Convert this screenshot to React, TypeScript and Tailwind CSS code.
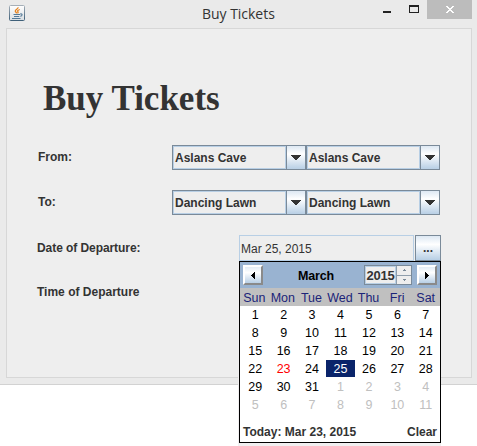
import React from "react";

const DAYS = ["Sun", "Mon", "Tue", "Wed", "Thu", "Fri", "Sat"];
const CELLS = Array.from({ length: 42 }, (_, i) => ({
  day: i < 31 ? i + 1 : i - 30,
  outside: i >= 31,
}));

function JavaIcon() {
  return (
    <svg width="16" height="16" viewBox="0 0 16 16" fill="none">
      <defs>
        <linearGradient id="tile" x1="0" y1="0" x2="0" y2="1">
          <stop offset="0" stopColor="#fff" />
          <stop offset="1" stopColor="#d9dee2" />
        </linearGradient>
        <linearGradient id="edge" x1="0" y1="0" x2="0" y2="1">
          <stop offset="0" stopColor="#a5afb8" />
          <stop offset="1" stopColor="#3f6079" />
        </linearGradient>
      </defs>
      <rect x=".5" y=".5" width="15" height="15" rx="1" fill="url(#tile)" stroke="url(#edge)" />
      <path d="M9 2.300C9.600 4 6 4.500 6.300 6.200C6.400 7 7.500 7.500 7.700 8.300M10.800 4.500C8.500 5.200 8.200 6 9 6.800C9.300 7.300 9 7.900 8.500 8.300" stroke="#e8841f" strokeWidth="1.300" />
      <path d="M4.500 9.500H11M5 11.500H10.300M3 13.500H11.500M11.200 9C13.800 8.300 13.600 11 11.200 11.300" stroke="#557a98" strokeWidth="1.100" />
    </svg>
  );
}

function Combo({ value }: { value: string }) {
  return (
    <div className="flex h-[25px] w-[134px] border border-[#7a8a99]">
      <div className="flex-1 border border-[#b8cfe5] pl-px leading-[22px] whitespace-nowrap">{value}</div>
      <div className="flex w-[19px] items-center justify-center border-l border-[#7a8a99] bg-linear-to-b from-[#dde8f3] via-white via-35% to-[#b8cfe5]">
        <svg width="10" height="5" viewBox="0 0 10 5" shapeRendering="crispEdges">
          <path d="M0 0H10V1H9V2H8V3H7V4H6V5H4V4H3V3H2V2H1V1H0Z" fill="#333" />
        </svg>
      </div>
    </div>
  );
}

function ArrowButton({ next = false }: { next?: boolean }) {
  return (
    <button className="flex h-5 w-5 items-center justify-center border-2 border-t-white border-l-white border-r-[#8a8a8a] border-b-[#8a8a8a] bg-linear-to-b from-[#e4edf6] via-white via-35% to-[#b8cfe5]">
      <svg width="4" height="7" viewBox="0 0 4 7" shapeRendering="crispEdges">
        <path d={next ? "M0 0H1V1H2V2H3V3H4V4H3V5H2V6H1V7H0Z" : "M4 0H3V1H2V2H1V3H0V4H1V5H2V6H3V7H4Z"} fill="#000" />
      </svg>
    </button>
  );
}

function SpinnerButton({ down = false }: { down?: boolean }) {
  return (
    <div className={`flex flex-1 items-center justify-center border-l border-[#8f9eac] bg-[#eee] ${down ? "border-t" : ""}`}>
      <svg width="3" height="2" viewBox="0 0 3 2" shapeRendering="crispEdges">
        <path d={down ? "M0 0H3V1H2V2H1V1H0Z" : "M1 0H2V1H3V2H0V1H1Z"} fill="#7a8a99" />
      </svg>
    </div>
  );
}

function Calendar() {
  return (
    <div className="absolute top-[26px] left-0 h-[182px] w-[202px] border border-black bg-white shadow-[0_4px_0_0_#f1eff0,-1px_4px_0_0_#f1eff0]">
      <div className="flex h-[26px] items-center bg-[#99b3d1] pl-[3px]">
        <ArrowButton />
        <div className="w-[101px] pt-px pl-[5px] text-center text-[12.5px] leading-5 tracking-[-0.2px] text-black">March</div>
        <div className="flex h-5 w-12 border border-[#7a8a99]">
          <div className="w-[31px] border border-[#b8cfe5] bg-[#eee] text-center text-[13px] leading-[18px] tracking-[-0.2px]">2015</div>
          <div className="flex flex-1 flex-col">
            <SpinnerButton />
            <SpinnerButton down />
          </div>
        </div>
        <div className="ml-[5px]"><ArrowButton next /></div>
      </div>
      <div className="grid h-[18px] grid-cols-7 bg-[#c0c0c0] text-center text-[12.5px] leading-[20px] font-normal text-[#1b2479]">
        {DAYS.map((d) => <div key={d}>{d}</div>)}
      </div>
      <div className="grid grid-cols-7 pl-px text-center text-[12.5px] leading-[18px] font-normal text-black">
        {CELLS.map((c, i) => {
          const color = c.outside ? "text-[#c0c0c0]" : c.day === 23 ? "text-[#ff0000]" : c.day === 25 ? "bg-[#0a246a] text-white" : "";
          return (
            <div key={i} className="h-[18px] pb-px">
              <div className={`h-[17px] leading-[18px] ${color}`}>{c.day}</div>
            </div>
          );
        })}
      </div>
      <div className="mt-[9px] flex justify-between pr-[3px] pl-[3px] leading-[18px] whitespace-nowrap">
        <span>Today: Mar 23, 2015</span>
        <span>Clear</span>
      </div>
    </div>
  );
}

export default function App() {
  return (
    <div className="h-[446px] w-[477px] overflow-hidden bg-white font-['Liberation_Sans',Arial,sans-serif] text-[12px] font-bold text-[#333]">
      <div className="h-[385px] border-b border-[#d2d2d2] bg-[#eaeaea] pr-[5px] pl-[6px]">
        <header className="flex h-7 items-start">
          <div className="mt-[5px] ml-[3px] w-4"><JavaIcon /></div>
          <div className="ml-[177px] w-[181px] text-[14px] leading-[27px] font-normal tracking-[-0.03px] text-[#333] font-['Open_Sans',sans-serif]">Buy Tickets</div>
          <svg className="h-[19px] w-[36px]" viewBox="0 0 36 19" fill="#222" shapeRendering="crispEdges">
            <path d="M0 11H8V13H0Z" />
            <path fillRule="evenodd" d="M26 5H36V13H26ZM27 7V12H35V7Z" />
          </svg>
          <button className="ml-[8px] flex h-[19px] w-[45px] items-center justify-center bg-[#bcbcbc]">
            <svg width="8" height="7" viewBox="0 0 8 7" shapeRendering="crispEdges" fill="#fff">
              <path d="M0 0H2V1H3V2H5V1H6V0H8V1H7V2H6V3H5V4H6V5H7V6H8V7H6V6H5V5H3V6H2V7H0V6H1V5H2V4H3V3H2V2H1V1H0Z" />
            </svg>
          </button>
        </header>
        <main className="h-[350px] border border-[#d7d7d7] bg-[#eee] pt-[49px] pl-[30px]">
          <h1 className="ml-[6px] h-[67px] text-[35px] leading-[42px] font-['Liberation_Serif','Times_New_Roman',serif]">Buy Tickets</h1>
          <div className="flex h-[45px] items-start">
            <label className="ml-px w-[134px] leading-[25px]">From:</label>
            <Combo value="Aslans Cave" />
            <Combo value="Aslans Cave" />
          </div>
          <div className="flex h-[45px] items-start">
            <label className="ml-px w-[134px] leading-[25px]">To:</label>
            <Combo value="Dancing Lawn" />
            <Combo value="Dancing Lawn" />
          </div>
          <div className="flex h-[45px]">
            <label className="w-[202px] leading-[27px] tracking-[-0.07px]">Date of Departure:</label>
            <div className="relative flex h-[26px] w-[202px]">
              <div className="mr-px w-[175px] border border-[#b8cfe5] pl-px text-[12px] leading-[26px] font-normal">Mar 25, 2015</div>
              <button className="w-[26px] border border-[#7a8a99] bg-linear-to-b from-[#dde8f3] via-white via-35% to-[#b8cfe5] leading-[24px]">...</button>
              <Calendar />
            </div>
          </div>
          <label className="block leading-[24px]">Time of Departure</label>
        </main>
      </div>
    </div>
  );
}
